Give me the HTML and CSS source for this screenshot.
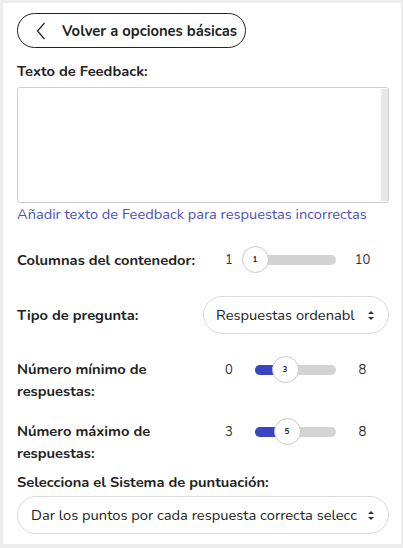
FILE: index.html
```html
<!DOCTYPE html>
<html lang="es">
<head>
<meta charset="utf-8">
<link rel="stylesheet" href="styles.css">
</head>
<body>
<div class="frame">
  <div class="card">
    <button class="back">
      <svg class="chev" width="10" height="18" viewBox="0 0 10 18"><path d="M8.5 1 L1.5 9 L8.5 17" fill="none" stroke="#222" stroke-width="1.2"/></svg>
      <span>Volver a opciones básicas</span>
    </button>

    <div class="label fb-label">Texto de Feedback:</div>
    <div class="textarea"><div class="scroll"></div></div>
    <div class="link">Añadir texto de Feedback para respuestas incorrectas</div>

    <div class="row r1">
      <div class="label">Columnas del contenedor:</div>
      <div class="slider">
        <span class="min">1</span>
        <div class="track">
          <div class="fill" style="width:0px"></div>
          <div class="thumb" style="left:0px">1</div>
        </div>
        <span class="max">10</span>
      </div>
    </div>

    <div class="row r2">
      <div class="label">Tipo de pregunta:</div>
      <div class="select half"><span class="val">Respuestas ordenabl</span><span class="arrows"></span></div>
    </div>

    <div class="row r3 top">
      <div class="label">Número mínimo de<br>respuestas:</div>
      <div class="slider">
        <span class="min">0</span>
        <div class="track">
          <div class="fill" style="width:30px"></div>
          <div class="thumb" style="left:30px">3</div>
        </div>
        <span class="max">8</span>
      </div>
    </div>

    <div class="row r4 top">
      <div class="label">Número máximo de<br>respuestas:</div>
      <div class="slider">
        <span class="min">3</span>
        <div class="track">
          <div class="fill" style="width:32px"></div>
          <div class="thumb" style="left:32px">5</div>
        </div>
        <span class="max">8</span>
      </div>
    </div>

    <div class="label sel-label">Selecciona el Sistema de puntuación:</div>
    <div class="select full"><span class="val">Dar los puntos por cada respuesta correcta selecc</span><span class="arrows"></span></div>
  </div>
</div>
</body>
</html>
```

FILE: styles.css
```css
* { box-sizing: border-box; }
html, body { margin: 0; padding: 0; }
body {
  background: #ececec;
  font-family: "Nunito", "Lato", "Noto Sans", sans-serif;
  color: #222;
  width: 403px;
  height: 548px;
  overflow: hidden;
}
.frame {
  padding: 3px 2px 4px 3px;
}
.card {
  background: #fff;
  height: 541px;
  padding: 10px 12px 10px 14px;
  display: flex;
  flex-direction: column;
}
.back {
  align-self: flex-start;
  height: 35px;
  width: 229px;
  border: 1px solid #222;
  border-radius: 18px;
  background: #fff;
  display: flex;
  align-items: center;
  padding: 0 0 0 18px;
  font-family: inherit;
  font-size: 14.8px;
  font-weight: 700;
  color: #222;
}
.back .chev { margin-right: 16px; }
.label {
  font-size: 14.7px;
  font-weight: 700;
  line-height: 22px;
}
.fb-label { margin-top: 12px; }
.textarea {
  margin-top: 5px;
  height: 116px;
  border: 1px solid #cfcfcf;
  border-radius: 3px;
  display: flex;
  justify-content: flex-end;
  padding: 1px 0 1px 0;
}
.scroll {
  width: 7px;
  background: #e8e8e8;
}
.link {
  color: #4a50b8;
  font-size: 14.6px;
  line-height: 20px;
  margin-top: 1px;
}
.row {
  display: grid;
  grid-template-columns: 186px 186px;
  align-items: center;
}
.row.top { align-items: start; }
.r1 { margin-top: 22px; }
.r2 { margin-top: 23px; }
.r3 { margin-top: 24px; }
.r4 { margin-top: 18px; }
.slider {
  display: flex;
  align-items: center;
  height: 27px;
}
.row.top .slider { margin-top: -2px; }
.slider .min {
  width: 52px;
  text-align: center;
  font-size: 13px;
  color: #333;
}
.slider .max {
  width: 53px;
  text-align: center;
  font-size: 13px;
  color: #333;
}
.track {
  position: relative;
  width: 81px;
  height: 10px;
  border-radius: 5px;
  background: #d3d3d3;
}
.fill {
  position: absolute;
  left: 0; top: 0; bottom: 0;
  background: #3a45c4;
  border-radius: 5px 0 0 5px;
}
.thumb {
  position: absolute;
  top: 50%;
  width: 27px;
  height: 27px;
  margin-left: -13.5px;
  margin-top: -13.5px;
  border-radius: 50%;
  background: #fff;
  border: 1px solid #c8c8c8;
  font-size: 8px;
  font-weight: 700;
  display: flex;
  align-items: center;
  justify-content: center;
}
.select {
  height: 38px;
  border: 1px solid #dadada;
  border-radius: 19px;
  display: flex;
  align-items: center;
  justify-content: space-between;
  padding: 0 14px 0 12px;
  font-size: 14.7px;
  white-space: nowrap;
}
.select .val { overflow: hidden; min-width: 0; }
.arrows {
  position: relative;
  width: 6px;
  height: 9px;
  flex: none;
  margin-left: 10px;
}
.arrows::before, .arrows::after {
  content: "";
  position: absolute;
  left: 0;
  border-left: 3px solid transparent;
  border-right: 3px solid transparent;
}
.arrows::before { top: 0; border-bottom: 3.5px solid #333; }
.arrows::after { bottom: 0; border-top: 3.5px solid #333; }
.sel-label { margin-top: 7px; }
.select.full { margin-top: 3px; padding-left: 13px; }
```
